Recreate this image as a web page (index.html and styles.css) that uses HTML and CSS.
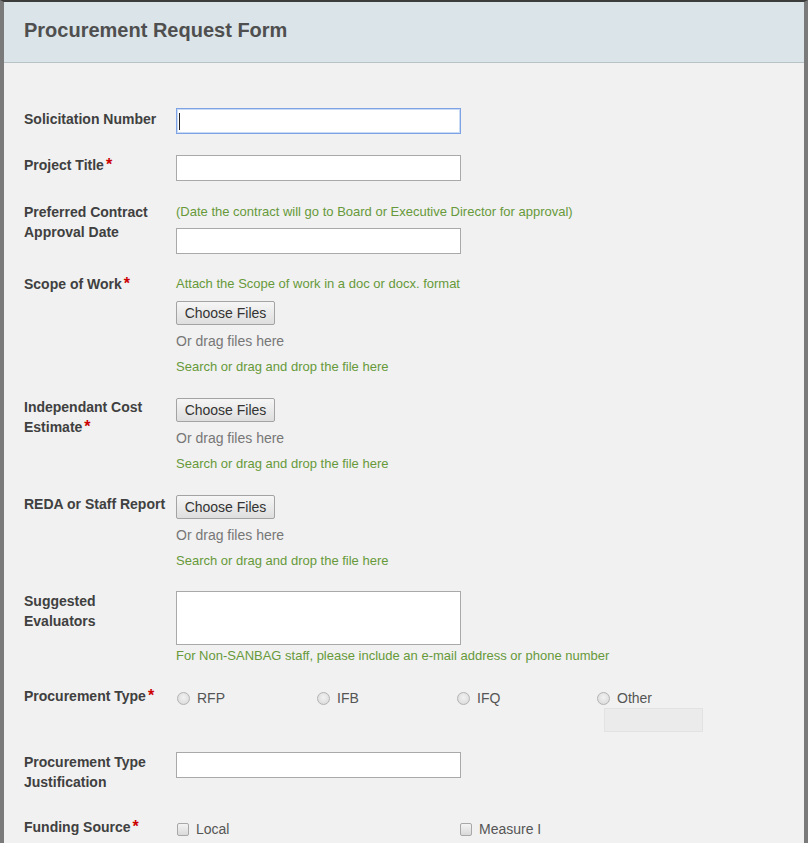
FILE: index.html
```html
<!DOCTYPE html>
<html lang="en">
<head>
<meta charset="utf-8">
<title>Procurement Request Form</title>
<link rel="stylesheet" href="styles.css">
</head>
<body>
<div class="frame">
  <header class="form-header">
    <h1 class="form-title">Procurement Request Form</h1>
  </header>
  <main class="form-body">
    <div class="row row-tight">
      <label class="label label-first">Solicitation Number</label>
      <div class="field"><input class="text-input focused" type="text"></div>
    </div>
    <div class="row row-tight">
      <label class="label">Project Title<span class="req">*</span></label>
      <div class="field"><input class="text-input" type="text"></div>
    </div>
    <div class="row">
      <label class="label">Preferred Contract Approval Date</label>
      <div class="field">
        <div class="hint">(Date the contract will go to Board or Executive Director for approval)</div>
        <input class="text-input after-hint" type="text">
      </div>
    </div>
    <div class="row">
      <label class="label">Scope of Work<span class="req">*</span></label>
      <div class="field">
        <div class="hint">Attach the Scope of work in a doc or docx. format</div>
        <button class="file-btn after-hint" type="button">Choose Files</button>
        <div class="drag">Or drag files here</div>
        <div class="hint search">Search or drag and drop the file here</div>
      </div>
    </div>
    <div class="row">
      <label class="label"><span class="line">Independant Cost</span> <span class="line">Estimate<span class="req">*</span></span></label>
      <div class="field">
        <button class="file-btn first" type="button">Choose Files</button>
        <div class="drag">Or drag files here</div>
        <div class="hint search">Search or drag and drop the file here</div>
      </div>
    </div>
    <div class="row">
      <label class="label">REDA or Staff Report</label>
      <div class="field">
        <button class="file-btn first" type="button">Choose Files</button>
        <div class="drag">Or drag files here</div>
        <div class="hint search">Search or drag and drop the file here</div>
      </div>
    </div>
    <div class="row">
      <label class="label">Suggested Evaluators</label>
      <div class="field">
        <textarea class="text-area"></textarea>
        <div class="hint after-area">For Non-SANBAG staff, please include an e-mail address or phone number</div>
      </div>
    </div>
    <div class="row">
      <label class="label">Procurement Type<span class="req">*</span></label>
      <div class="field">
        <div class="choices four">
          <div class="choice"><span class="radio"></span><span class="choice-text">RFP</span></div>
          <div class="choice"><span class="radio"></span><span class="choice-text">IFB</span></div>
          <div class="choice"><span class="radio"></span><span class="choice-text">IFQ</span></div>
          <div class="choice-other">
            <div class="choice"><span class="radio"></span><span class="choice-text">Other</span></div>
            <input class="other-input" type="text" disabled>
          </div>
        </div>
      </div>
    </div>
    <div class="row">
      <label class="label">Procurement Type Justification</label>
      <div class="field"><input class="text-input" type="text"></div>
    </div>
    <div class="row row-funding">
      <label class="label">Funding Source<span class="req">*</span></label>
      <div class="field">
        <div class="choices two">
          <div class="choice"><span class="check"></span><span class="choice-text">Local</span></div>
          <div class="choice"><span class="check"></span><span class="choice-text">Measure I</span></div>
        </div>
      </div>
    </div>
  </main>
</div>
</body>
</html>
```

FILE: styles.css
```css
html, body {
  margin: 0;
  padding: 0;
  height: 843px;
  overflow: hidden;
  background: #707070;
}

.frame {
  box-sizing: border-box;
  min-height: 843px;
  border-top: 2px solid #3c3c3c;
  border-left: 4px solid #7a7a7a;
  border-right: 4px solid #7a7a7a;
  background: #f1f1f1;
  font-family: "Liberation Sans", Arial, sans-serif;
}

.form-header {
  box-sizing: border-box;
  height: 61px;
  padding: 16px 20px 0;
  background: #dae4e9;
  border-bottom: 1px solid #b7c2c7;
}

.form-title {
  margin: 0;
  font-size: 20px;
  line-height: 24px;
  font-weight: bold;
  color: #4f4f4f;
}

.form-body {
  padding: 45px 20px 0;
}

.row {
  display: grid;
  grid-template-columns: 152px 1fr;
  margin-bottom: 20px;
}

.row-tight {
  margin-bottom: 21px;
}

.row-funding {
  margin-top: 25px;
}

.label {
  display: block;
  width: 145px;
  font-size: 14px;
  line-height: 20px;
  font-weight: bold;
  color: #404040;
}

.label-first {
  padding-top: 1px;
}

.line {
  white-space: nowrap;
}

.req {
  color: #c00;
  font-size: 16px;
  margin-left: 2px;
}

.field {
  display: flex;
  flex-direction: column;
  align-items: flex-start;
}

.text-input {
  box-sizing: border-box;
  width: 285px;
  height: 26px;
  margin: 0;
  border: 1px solid #a9a9a9;
  background: #fff;
  font-family: inherit;
  font-size: 14px;
}

.text-input.focused {
  border: 1px solid #7ea3e4;
  box-shadow: inset 0 0 0 1px #c9daf5;
  outline: none;
  background: linear-gradient(#222, #222) no-repeat 2px 4px / 1px 17px, #fff;
}

.after-hint {
  margin-top: 6px;
}

.hint {
  font-size: 13px;
  line-height: 20px;
  color: #67993a;
}

.search {
  margin-top: 6px;
}

.after-area {
  margin-top: 1px;
}

.file-btn {
  box-sizing: border-box;
  width: 99px;
  height: 24px;
  padding: 0;
  border: 1px solid #a3a3a3;
  border-radius: 2px;
  background: linear-gradient(#f6f6f6, #dedede);
  font-family: "Liberation Sans", Arial, sans-serif;
  font-size: 14px;
  color: #333;
}

.file-btn.after-hint {
  margin-top: 7px;
}

.file-btn.first {
  margin-top: 1px;
}

.drag {
  margin-top: 6px;
  font-size: 14px;
  line-height: 20px;
  color: #777;
}

.text-area {
  box-sizing: border-box;
  width: 285px;
  height: 54px;
  margin: 0;
  border: 1px solid #a9a9a9;
  background: #fff;
  resize: none;
}

.choices {
  display: grid;
  padding-top: 2px;
}

.choices.four {
  grid-template-columns: 140px 140px 140px 140px;
}

.choices.two {
  grid-template-columns: 283px 283px;
}

.choice {
  display: flex;
  align-items: center;
  height: 20px;
}

.choice-text {
  font-size: 14px;
  color: #555;
}

.radio {
  box-sizing: border-box;
  width: 13px;
  height: 13px;
  margin-left: 1px;
  margin-right: 7px;
  border: 1px solid #b3b3b3;
  border-radius: 50%;
  background: radial-gradient(circle at 50% 40%, #f2f2f2, #d6d6d6);
}

.check {
  box-sizing: border-box;
  width: 12px;
  height: 13px;
  margin-left: 1px;
  margin-right: 7px;
  border: 1px solid #a8a8a8;
  border-radius: 2px;
  background: linear-gradient(#f4f4f4, #d9d9d9);
}

.choice-other {
  display: flex;
  flex-direction: column;
}

.other-input {
  box-sizing: border-box;
  width: 99px;
  height: 24px;
  margin: 0 0 0 8px;
  border: 1px solid #e2e2e2;
  background: #ebebeb;
}
```
